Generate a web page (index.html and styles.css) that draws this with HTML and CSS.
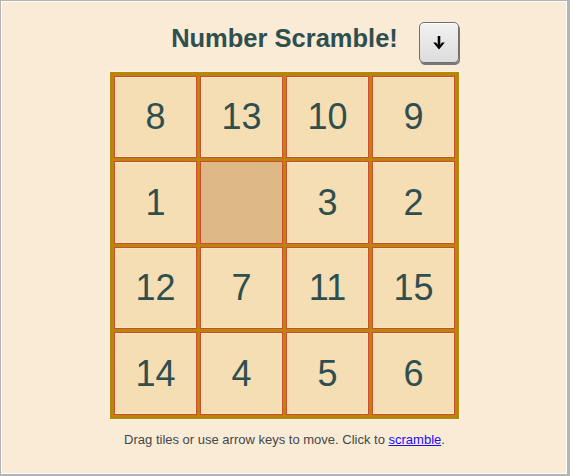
FILE: index.html
```html
<!DOCTYPE html>
<html lang="en">
<head>
<meta charset="utf-8">
<title>Number Scramble!</title>
<link rel="stylesheet" href="styles.css">
</head>
<body>
<div class="frame">
  <div class="game">
    <header class="header">
      <h1 class="title">Number Scramble!</h1>
      <button class="menu-btn" type="button" aria-label="Menu">
        <svg width="14" height="16" viewBox="0 0 14 16" aria-hidden="true">
          <path d="M7 1 V11" stroke="#000" stroke-width="2.6" fill="none"/>
          <path d="M1.2 7.6 L7 14.6 L12.8 7.6 L10 7.6 L7 11.2 L4 7.6 Z" fill="#000"/>
        </svg>
      </button>
    </header>
    <div class="board">
      <div class="tile">8</div>
      <div class="tile">13</div>
      <div class="tile">10</div>
      <div class="tile">9</div>
      <div class="tile">1</div>
      <div class="tile empty"></div>
      <div class="tile">3</div>
      <div class="tile">2</div>
      <div class="tile">12</div>
      <div class="tile">7</div>
      <div class="tile">11</div>
      <div class="tile">15</div>
      <div class="tile">14</div>
      <div class="tile">4</div>
      <div class="tile">5</div>
      <div class="tile">6</div>
    </div>
    <p class="hint">Drag tiles or use arrow keys to move. Click to <a href="#" class="link">scramble</a>.</p>
  </div>
</div>
</body>
</html>
```

FILE: styles.css
```css
html, body {
  margin: 0;
  padding: 0;
}

body {
  background: #faebd7;
  font-family: "Liberation Sans", Arial, sans-serif;
}

.frame {
  box-sizing: border-box;
  height: 100vh;
  border-style: solid;
  border-color: #b4b4b4;
  border-width: 1px 3px 2px 1px;
  box-shadow: inset 1px 1px 0 #fffaf2, inset -1px -1px 0 #ffffff;
  background: #faebd7;
  display: flex;
  justify-content: center;
  padding-left: 1px;
}

.game {
  width: 349px;
  padding-top: 21px;
}

.header {
  display: grid;
  grid-template-columns: 1fr auto 1fr;
  align-items: start;
}

.title {
  grid-column: 2;
  margin: 1px 0 0;
  font-size: 25.5px;
  line-height: 30px;
  font-weight: bold;
  color: #2f4f4f;
  white-space: nowrap;
}

.menu-btn {
  grid-column: 3;
  justify-self: end;
  width: 40px;
  height: 41px;
  padding: 0;
  display: flex;
  align-items: center;
  justify-content: center;
  border: 1px solid #6f6f6f;
  border-radius: 5px;
  background: linear-gradient(#f2f2f2, #dcdcdc);
  box-shadow: 1px 2px 0 #777, inset 0 1px 0 #fff;
}

.board {
  margin-top: 9px;
  display: grid;
  grid-template-columns: repeat(4, 83px);
  grid-template-rows: 82px 83px 82px 83px;
  gap: 3px;
  border: 4px solid #b8860b;
  background: #b8860b;
  box-shadow: 0 0 0 1px #fdf3e6;
}

.tile {
  box-sizing: border-box;
  display: flex;
  align-items: center;
  justify-content: center;
  background: #f5deb3;
  border: 1px solid #d24a2a;
  box-shadow: inset 0 0 0 1px #f9e7c8;
  color: #2f4f4f;
  font-size: 36px;
  line-height: 1;
}

.tile.empty {
  background: #deb887;
  box-shadow: none;
}

.hint {
  margin: 13px 0 0;
  text-align: center;
  font-size: 13px;
  color: #404848;
}

.link {
  color: #1a0dff;
  text-decoration: underline;
}
```
